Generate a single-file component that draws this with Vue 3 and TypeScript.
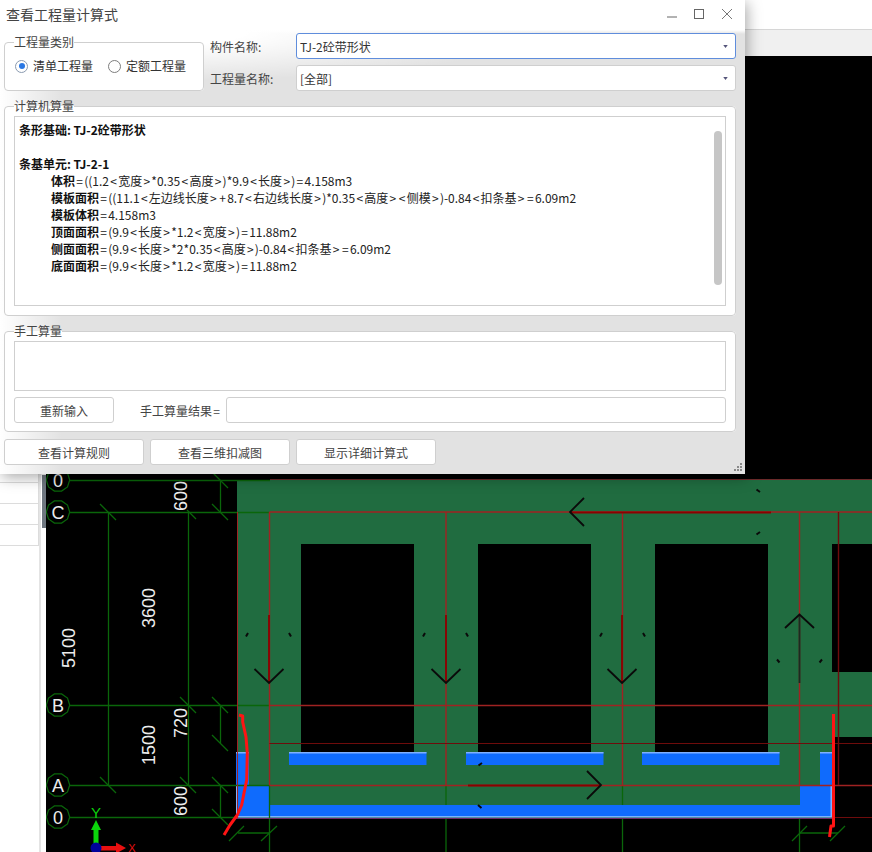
<script setup lang="ts">
interface CalcLine {
  label: string;
  formula: string;
}

const calcLines: CalcLine[] = [
  { label: '体积', formula: '=((1.2<宽度>*0.35<高度>)*9.9<长度>)=4.158m3' },
  { label: '模板面积', formula: '=((11.1<左边线长度>+8.7<右边线长度>)*0.35<高度><侧模>)-0.84<扣条基>=6.09m2' },
  { label: '模板体积', formula: '=4.158m3' },
  { label: '顶面面积', formula: '=(9.9<长度>*1.2<宽度>)=11.88m2' },
  { label: '侧面面积', formula: '=(9.9<长度>*2*0.35<高度>)-0.84<扣条基>=6.09m2' },
  { label: '底面面积', formula: '=(9.9<长度>*1.2<宽度>)=11.88m2' }
];

// the symbols run wider than the digits in the original font
const tokens = (formula: string) => formula.split(/([<>=+])/).filter(Boolean);
const isSymbol = (part: string) => /^[<>=+]$/.test(part);

const footerButtons = ['查看计算规则', '查看三维扣减图', '显示详细计算式'];
const sideRows = [0, 1, 2, 3];

interface AxisMark {
  name: string;
  y: number;
}

const axisMarks: AxisMark[] = [
  { name: '0', y: 480 },
  { name: 'C', y: 512 },
  { name: 'B', y: 705 },
  { name: 'A', y: 785 },
  { name: '0', y: 817 }
];

const dimTexts = [
  { text: '600', x: 187, y: 496 },
  { text: '3600', x: 155, y: 608 },
  { text: '5100', x: 75, y: 648 },
  { text: '720', x: 187, y: 723 },
  { text: '1500', x: 155, y: 745 },
  { text: '600', x: 187, y: 801 }
];

// back-slash ticks on the dimension lines
const dimTicks = [
  [108, 512], [220, 480], [220, 512], [188, 705], [220, 705], [220, 743],
  [108, 785], [188, 785], [220, 785], [220, 817]
];

const bubble = (cx: number, cy: number, r = 11.7) => {
  const pts: string[] = [];
  for (let i = 0; i < 10; i++) {
    const a = (Math.PI / 5) * i;
    pts.push(`${(cx + r * Math.cos(a)).toFixed(1)},${(cy + r * Math.sin(a)).toFixed(1)}`);
  }
  return pts.join(' ');
};

const downArrows = [269, 446, 622];
const blueStrips = [289, 466, 642];
</script>

<template>
  <div class="page">
    <div class="top-strip">
      <div class="top-white"></div>
    </div>

    <div class="work">
      <div class="side">
        <div class="side-rows">
          <div v-for="row in sideRows" :key="row" class="side-row"></div>
        </div>
        <div class="splitter"><span class="splitter-thumb"></span></div>
      </div>

      <svg class="canvas" viewBox="46 56 826 796" width="826" height="796">
        <rect x="46" y="56" width="826" height="796" fill="#000" />

        <!-- slab -->
        <path
          fill="#206c40"
          fill-rule="evenodd"
          d="M237 480H872V737H833V818H237Z M301 544V752H414V544Z M478 544V752H591V544Z M655 544V752H768V544Z M832 544V672H872V544Z"
        />

        <!-- blue pieces -->
        <g fill="#0f6bfd">
          <rect v-for="x in blueStrips" :key="x" :x="x" y="752" width="137.500" height="13" />
          <rect x="236" y="752" width="13" height="33" />
          <rect x="820" y="752" width="12" height="33" />
          <rect x="236" y="785" width="33" height="32" />
          <rect x="800" y="785" width="32" height="32" />
          <rect x="270" y="805" width="530" height="12" />
        </g>
        <g fill="#7fb0ff">
          <rect v-for="x in blueStrips" :key="x" :x="x" y="752" width="137.500" height="1.500" />
          <rect x="236" y="752" width="13" height="1.500" />
          <rect x="820" y="752" width="12" height="1.500" />
          <rect x="236" y="785" width="1.500" height="32" />
          <rect x="830.500" y="785" width="1.500" height="32" />
          <rect x="236" y="816" width="596" height="1.500" />
        </g>

        <!-- axis lines -->
        <g stroke="#0a660a" stroke-width="1.300" fill="none">
          <path d="M46 480.500H270M46 512.500H269M46 705.500H269M46 785.500H269M46 817.500H236" />
          <path d="M108.500 512V785M188.500 512V785M220.500 480V512M220.500 705V743M220.500 785V817" />
          <path d="M269.500 785V852M446 785V805M446 818V852M622.500 785V805M622.500 818V852M799.500 818V852" />
          <path d="M238 833H269M800 833H838" />
          <path d="M229 841L244 826M261 841L277 826M792 841L807 826M830 841L845 826" />
          <path d="M187 510L196 519" />
          <path
            v-for="(tick, i) in dimTicks"
            :key="i"
            :d="`M${tick[0] - 8} ${tick[1] - 8}L${tick[0] + 8} ${tick[1] + 8}`"
          />
        </g>

        <!-- red grid -->
        <g stroke="#a02222" stroke-width="1.400" fill="none">
          <path d="M237.500 512V818" stroke-width="1" />
          <path d="M269.500 512H872M269.500 705.500H872M269.500 785.500H872" />
          <path d="M269.500 512V785M446 512V785M622.500 512V785M799.500 512V785" />
          <path d="M838.500 512V785" stroke="#6e0c0c" />
          <path d="M270 479.500H872" stroke="#6b2a2a" stroke-width="1" />
          <path d="M269.500 743.500H872" stroke="#6e0c0c" stroke-width="1" />
          <path d="M236 818.500H832" stroke="#6a2a6a" stroke-width="1" />
          <path d="M832 817.500H872" stroke="#6e0c0c" stroke-width="1" />
        </g>

        <!-- direction arrows -->
        <g stroke="#8b0000" stroke-width="1.800" fill="none">
          <path v-for="x in downArrows" :key="x" :d="`M${x} 615V683`" />
          <path d="M570 512.500H771M468 785.500H601" />
        </g>
        <g stroke="#0a0a0a" stroke-width="1.800" fill="none">
          <path d="M799.500 615V683" stroke="#1c2a20" />
          <path v-for="x in downArrows" :key="x" :d="`M${x - 14.500} 669L${x} 683L${x + 14.500} 669`" />
          <path d="M785 628L799.500 614.500L814 628" />
          <path d="M584 498L570 512L584 526M587 771L601 785L587 799" />
          <path
            stroke-width="2"
            d="M248 633L246 636.500M289 633L291 636.500M425 633L423 636.500M466 633L468 636.500M602 633L600 636.500M643 633L645 636.500M777 659.500L779.500 662.500M822 659.500L819.500 662.500M756.500 489.500L760 492M756.500 534.500L760 532M482 763L478.500 765.500M478 805L481.500 808"
          />
        </g>

        <!-- red hand marks -->
        <g stroke="#ff1414" stroke-width="3" fill="none" stroke-linejoin="round">
          <path d="M239 715L242.700 716L242.700 722L246 737L247.300 753L246.700 780L244 793L241.700 805L237.300 815L230 825L224 835" />
          <path d="M833.500 714V826H831L829.500 837" />
        </g>

        <!-- axis bubbles -->
        <g v-for="mark in axisMarks" :key="mark.y">
          <polygon :points="bubble(58, mark.y)" fill="#000" stroke="#0a660a" stroke-width="1.200" />
          <text class="cad-text" x="58" :y="mark.y + 6.500" text-anchor="middle" font-size="18">{{ mark.name }}</text>
        </g>

        <!-- dimensions -->
        <text
          v-for="dim in dimTexts"
          :key="dim.text + dim.y"
          class="cad-text"
          :transform="`translate(${dim.x} ${dim.y}) rotate(-90)`"
          text-anchor="middle"
          font-size="18"
        >{{ dim.text }}</text>

        <!-- origin -->
        <path d="M93.500 830H98.500V844H93.500ZM96 820L101 830H91Z" fill="#0bd40b" />
        <path d="M101 846H116V850.500H101ZM116 842.500L126 848L116 853.500Z" fill="#e81010" />
        <circle cx="96" cy="848" r="5.500" fill="#00009c" />
        <text class="axis-letter" x="96" y="818" fill="#0bd40b" text-anchor="middle">Y</text>
        <text class="axis-letter axis-letter--x" x="132" y="851.500" fill="#e81010" text-anchor="middle">X</text>
      </svg>
    </div>

    <section class="dialog">
      <header class="title-bar">
        <span class="title">查看工程量计算式</span>
        <div class="win-controls">
          <svg width="12" height="12" viewBox="0 0 12 12"><path d="M2 9H12" stroke="#666" fill="none" /></svg>
          <svg width="12" height="12" viewBox="0 0 12 12"><rect x="1.500" y="1.500" width="9" height="9" stroke="#666" fill="none" /></svg>
          <svg width="12" height="12" viewBox="0 0 12 12"><path d="M1 1L11 11M11 1L1 11" stroke="#777" fill="none" /></svg>
        </div>
      </header>

      <div class="top-row">
        <fieldset class="group type-group">
          <legend>工程量类别</legend>
          <div class="radios">
            <label class="radio">
              <span class="radio-mark radio-mark--on"></span>
              清单工程量
            </label>
            <label class="radio">
              <span class="radio-mark"></span>
              定额工程量
            </label>
          </div>
        </fieldset>

        <div class="combo-form">
          <span class="combo-label">构件名称:</span>
          <div class="combo combo--focus">
            <span>TJ-2砼带形状</span>
            <svg width="5" height="3" viewBox="0 0 6 4"><path d="M0 0H6L3 4Z" fill="#55557a" /></svg>
          </div>
          <span class="combo-label">工程量名称:</span>
          <div class="combo">
            <span>[全部]</span>
            <svg width="5" height="3" viewBox="0 0 6 4"><path d="M0 0H6L3 4Z" fill="#55557a" /></svg>
          </div>
        </div>
      </div>

      <fieldset class="group calc-group">
        <legend>计算机算量</legend>
        <div class="calc-box">
          <div class="calc-line calc-strong">条形基础: TJ-2砼带形状</div>
          <div class="calc-line"></div>
          <div class="calc-line calc-strong">条基单元: TJ-2-1</div>
          <div v-for="line in calcLines" :key="line.label" class="calc-line calc-indent">
            <b class="calc-strong">{{ line.label }}</b>
            <template v-for="(part, i) in tokens(line.formula)" :key="i">
              <span v-if="isSymbol(part)" class="sym">{{ part }}</span>
              <template v-else>{{ part }}</template>
            </template>
          </div>
          <span class="scroll-thumb"></span>
        </div>
      </fieldset>

      <fieldset class="group manual-group">
        <legend>手工算量</legend>
        <div class="manual-box"></div>
        <div class="manual-row">
          <button class="btn btn--reset" type="button">重新输入</button>
          <span class="manual-label">手工算量结果<span class="sym">=</span></span>
          <div class="manual-input"></div>
        </div>
      </fieldset>

      <footer class="footer">
        <button v-for="text in footerButtons" :key="text" class="btn btn--footer" type="button">{{ text }}</button>
      </footer>

      <svg class="grip" width="9" height="9" viewBox="0 0 9 9" fill="#8a8a8a">
        <rect x="6" y="0" width="2" height="2" />
        <rect x="3" y="3" width="2" height="2" />
        <rect x="6" y="3" width="2" height="2" />
        <rect x="0" y="6" width="2" height="2" />
        <rect x="3" y="6" width="2" height="2" />
        <rect x="6" y="6" width="2" height="2" />
      </svg>
    </section>
  </div>
</template>

<style scoped>
.page {
  position: relative;
  width: 872px;
  height: 852px;
  overflow: hidden;
  background: #fff;
  display: flex;
  flex-direction: column;
  font-family: "Noto Sans CJK SC", "Liberation Sans", sans-serif;
  font-size: 12px;
  color: #3a3a3a;
}

/* Background app */
.top-strip {
  height: 56px;
  background: #f0f0f0;
}

.top-white {
  height: 29px;
  background: #fff;
  border-bottom: 1px solid #d6d6d6;
}

.work {
  display: flex;
  height: 796px;
}

.side {
  width: 46px;
  display: flex;
  background: #fff;
}

.side-rows {
  width: 39px;
  height: 490px;
  display: flex;
  flex-direction: column;
  justify-content: flex-end;
  border-right: 1px solid #dcdcdc;
  box-sizing: border-box;
}

.side-row {
  height: 21px;
  box-sizing: border-box;
  border-bottom: 1px solid #dcdcdc;
}

.splitter {
  width: 7px;
  border-left: 2px solid #e4e4e4;
  box-sizing: border-box;
  padding-left: 1px;
}

.splitter-thumb {
  display: block;
  margin-top: 419px;
  height: 53px;
  background: #6f7780;
}

.canvas {
  display: block;
  flex: none;
}

.cad-text {
  font-family: "Liberation Sans", sans-serif;
  fill: #ececec;
}

.axis-letter {
  font-family: "Liberation Sans", sans-serif;
  font-size: 15px;
}

.axis-letter--x {
  font-size: 11px;
}

/* Dialog */
.dialog {
  position: absolute;
  left: 0;
  top: 0;
  width: 745px;
  height: 474px;
  box-sizing: border-box;
  padding: 0 9px 0 4px;
  display: flex;
  flex-direction: column;
  background:
    linear-gradient(to bottom, #fff 0, #fff 30px, rgba(255, 255, 255, 0) 34px),
    radial-gradient(ellipse 420px 50px at 120px 32px, #fff 30%, rgba(255, 255, 255, 0) 100%),
    linear-gradient(to right, #fff 0, rgba(255, 255, 255, 0) 62px),
    #e2e2e2;
  box-shadow: 2px 3px 14px rgba(0, 0, 0, 0.35);
}

.title-bar {
  height: 33px;
  flex: none;
  display: flex;
  justify-content: space-between;
  margin-right: -9px;
  padding: 0 12px 0 2px;
}

.title {
  font-size: 14px;
  line-height: 29px;
  color: #444;
}

.win-controls {
  display: flex;
  gap: 16px;
  padding-top: 8px;
}

.top-row {
  display: flex;
  height: 58px;
  flex: none;
}

.group {
  margin: 0;
  padding: 0 9px;
  border: 1px solid #cfcfcf;
  border-radius: 4px;
  background: #fff;
  min-width: 0;
  box-sizing: border-box;
}

.group legend {
  padding: 0;
  line-height: 16px;
  font-size: 12px;
  color: #444;
}

.type-group {
  width: 200px;
  height: 57px;
  margin-top: 1px;
  flex: none;
}

.radios {
  display: flex;
  gap: 15px;
  padding: 7px 0 0 1px;
}

.radio {
  display: flex;
  align-items: center;
  gap: 5px;
  line-height: 18px;
  color: #333;
}

.radio-mark {
  position: relative;
  width: 13px;
  height: 13px;
  box-sizing: border-box;
  border: 1px solid #7d7d7d;
  border-radius: 50%;
  background: #fff;
}

.radio-mark--on {
  border-color: #8a9ab0;
}

.radio-mark--on::after {
  content: "";
  position: absolute;
  left: 2.500px;
  top: 2.500px;
  width: 6px;
  height: 6px;
  border-radius: 50%;
  background: #2a78e4;
}

.combo-form {
  flex: 1;
  margin-left: 6px;
  display: grid;
  grid-template-columns: 86px 1fr;
  grid-auto-rows: 26px;
  row-gap: 6px;
  align-items: center;
}

.combo-label {
  color: #444;
}

.combo {
  height: 26px;
  box-sizing: border-box;
  display: flex;
  align-items: center;
  justify-content: space-between;
  padding: 0 7px 0 3px;
  background: #fff;
  border: 1px solid #cfcfcf;
  border-radius: 3px;
  color: #333;
}

.combo--focus {
  border-color: #5f8ddc;
}

.calc-group {
  height: 218px;
  margin-top: 7px;
  flex: none;
}

.calc-box {
  position: relative;
  height: 190px;
  margin-top: 2px;
  box-sizing: border-box;
  border: 1px solid #cfcfcf;
  padding: 4px;
}

.calc-line {
  height: 17px;
  line-height: 17px;
  white-space: nowrap;
  color: #222;
}

.calc-strong {
  font-weight: 700;
  color: #111;
}

.calc-indent {
  padding-left: 32px;
}

.sym {
  padding: 0 1.250px;
}

.scroll-thumb {
  position: absolute;
  right: 3px;
  top: 14px;
  width: 8px;
  height: 154px;
  border-radius: 4px;
  background: #c6c6c6;
}

.manual-group {
  height: 109px;
  margin-top: 7px;
  flex: none;
}

.manual-box {
  height: 50px;
  margin-top: 2px;
  box-sizing: border-box;
  border: 1px solid #cfcfcf;
}

.manual-row {
  display: flex;
  align-items: center;
  margin-top: 6px;
}

.btn {
  height: 26px;
  padding: 0;
  box-sizing: border-box;
  font: inherit;
  color: #444;
  background: #fff;
  border: 1px solid #cfcfcf;
  border-radius: 3px;
}

.btn--reset {
  width: 100px;
}

.manual-label {
  margin-left: 26px;
  width: 86px;
  white-space: nowrap;
  color: #444;
}

.manual-input {
  flex: 1;
  height: 26px;
  box-sizing: border-box;
  background: #fff;
  border: 1px solid #cfcfcf;
  border-radius: 3px;
}

.footer {
  display: flex;
  gap: 6px;
  margin-top: 7px;
}

.btn--footer {
  width: 140px;
}

.grip {
  position: absolute;
  right: 2px;
  bottom: 2px;
}
</style>
